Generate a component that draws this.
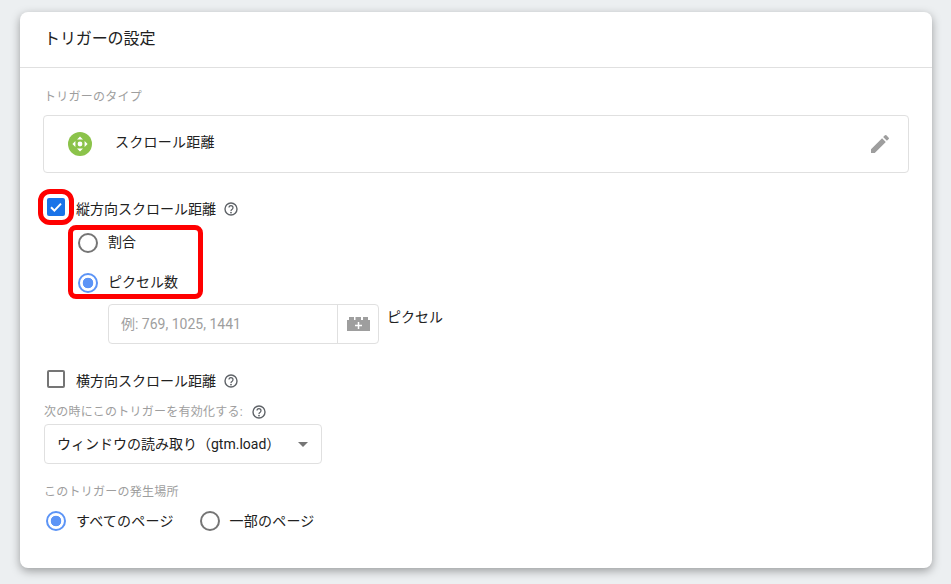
<div class="page">
  <section class="card">
    <header class="head">トリガーの設定</header>
    <div class="body">
      <div class="label type-label">トリガーのタイプ</div>
      <div class="type-box">
        <svg class="type-icon" viewBox="0 0 24 24" width="24" height="24">
          <circle cx="12" cy="12" r="12" fill="#8bc34a" />
          <circle cx="12" cy="12" r="2.4" fill="#fff" />
          <path d="M12 4.4l3 3h-6zM12 19.6l3-3H9zM4.4 12l3-3v6zM19.6 12l-3-3v6z" fill="#fff" />
        </svg>
        <span class="type-name">スクロール距離</span>
        <svg class="pencil" viewBox="0 0 24 24" width="24" height="24">
          <path d="M3 17.25V21h3.75L17.81 9.94l-3.75-3.75L3 17.25zM20.71 7.04a1 1 0 0 0 0-1.41l-2.34-2.34a1 1 0 0 0-1.41 0l-1.83 1.83 3.75 3.75 1.83-1.83z" fill="#9e9e9e" />
        </svg>
      </div>

      <div class="check-row first">
        <span class="check-mark">
          <span class="check on">
            <svg viewBox="0 0 18 18" width="18" height="18"><path d="M4 9.2l3.4 3.4L14 5.6" fill="none" stroke="#fff" stroke-width="2" /></svg>
          </span>
        </span>
        <span class="check-text">縦方向スクロール距離</span>
        <svg class="help" viewBox="0 0 16 16" width="16" height="16"><use href="#q" /></svg>
      </div>

      <div class="radio-group">
        <div class="radio-row"><span class="radio"></span><span class="raised">割合</span></div>
        <div class="radio-row second"><span class="radio on"></span><span class="raised">ピクセル数</span></div>
      </div>

      <div class="pixel-row">
        <div class="input">
          <span class="placeholder">例: 769, 1025, 1441</span>
          <span class="addon">
            <svg viewBox="0 0 23 14" width="23" height="14">
              <path d="M0 3h2V0h5v3h1.500V0h5.500v3H16V0h5v3h2v11H0z" fill="#9e9e9e" />
              <path d="M11.500 5v7M8 8.500h7" stroke="#fff" stroke-width="1.500" />
            </svg>
          </span>
        </div>
        <span class="unit">ピクセル</span>
      </div>

      <div class="check-row second-check">
        <span class="check"></span>
        <span class="check-text">横方向スクロール距離</span>
        <svg class="help" viewBox="0 0 16 16" width="16" height="16"><use href="#q" /></svg>
      </div>

      <div class="label fire-label">
        次の時にこのトリガーを有効化する:
        <svg class="help" viewBox="0 0 16 16" width="16" height="16"><use href="#q" /></svg>
      </div>
      <div class="select">
        <span>ウィンドウの読み取り（gtm.load）</span>
        <span class="caret"></span>
      </div>

      <div class="label where-label">このトリガーの発生場所</div>
      <div class="where">
        <div class="radio-row"><span class="radio on"></span><span class="wide">すべてのページ</span></div>
        <div class="radio-row"><span class="radio"></span><span class="wide">一部のページ</span></div>
      </div>
    </div>
  </section>

  <svg width="0" height="0" class="defs">
    <symbol id="q" viewBox="0 0 16 16">
      <circle cx="8" cy="8" r="6" fill="none" stroke="#5f6368" stroke-width="1.4" />
      <path d="M6 6.600a2 2 0 1 1 3.200 1.600c-.8.500-1.200.9-1.200 1.700" fill="none" stroke="#5f6368" stroke-width="1.300" />
      <circle cx="8" cy="11.600" r=".9" fill="#5f6368" />
    </symbol>
  </svg>
</div>

<style>
  :global(body) {
    margin: 0;
    background: #eceff1;
  }
  .page {
    width: 951px;
    height: 584px;
    padding: 12px 19px 0 20px;
    box-sizing: border-box;
    overflow: hidden;
    font-family: Roboto, "Noto Sans CJK JP", sans-serif;
    color: #212121;
    font-size: 14px;
    line-height: 20px;
  }
  .defs { position: absolute; }
  .card {
    height: 556px;
    background: #fff;
    border-radius: 8px;
    box-shadow: 0 3px 10px rgba(0, 0, 0, 0.35);
  }
  .head {
    height: 55px;
    border-bottom: 1px solid #e0e0e0;
    padding-left: 24px;
    font-size: 16px;
    letter-spacing: -0.1px;
    line-height: 53px;
  }
  .body { padding: 0 23px; }
  .label {
    font-size: 12px;
    line-height: 16px;
    color: #9e9e9e;
    padding-left: 1px;
    letter-spacing: 0.25px;
  }
  .type-label { padding-top: 21px; }
  .type-box {
    display: flex;
    align-items: center;
    height: 56px;
    margin-top: 10px;
    border: 1px solid #e0e0e0;
    border-radius: 4px;
    padding-left: 24px;
    padding-right: 16px;
  }
  .type-name { margin-left: 23px; margin-top: -4px; letter-spacing: 0.25px; }
  .pencil { margin-left: auto; }
  .type-icon { flex: none; }

  .check-row {
    display: flex;
    align-items: center;
    padding-left: 4px;
  }
  .first { margin-top: 25px; height: 18px; }
  .check {
    box-sizing: border-box;
    width: 18px;
    height: 18px;
    border: 2px solid #757575;
    border-radius: 2px;
    flex: none;
    display: block;
  }
  .check.on {
    background: #1a73e8;
    border: 0;
  }
  .check svg { display: block; }
  .check-mark {
    display: block;
    outline: 5px solid #f00;
    outline-offset: 4px;
    border-radius: 3px;
    width: 18px;
    height: 18px;
    flex: none;
  }
  .check-text { margin-left: 11px; margin-top: 4px; }
  .help { margin-left: 7px; flex: none; margin-top: 4px; }

  .radio-group {
    box-sizing: border-box;
    margin: 9px 0 0 25px;
    width: 135px;
    height: 74px;
    border: 5px solid #f00;
    border-radius: 8px;
    padding: 3px 5px;
  }
  .radio-row {
    display: flex;
    align-items: center;
    height: 20px;
    white-space: nowrap;
  }
  .second { margin-top: 20px; }
  .raised { margin-top: -2px; }
  .wide { letter-spacing: 0.2px; }
  .radio {
    box-sizing: border-box;
    width: 20px;
    height: 20px;
    border: 2px solid #757575;
    border-radius: 50%;
    margin-right: 10px;
    flex: none;
  }
  .radio.on {
    border-color: #5c94f6;
    background: radial-gradient(circle, #5c94f6 0 5px, #fff 5.6px);
  }

  .pixel-row {
    display: flex;
    margin: 5px 0 0 65px;
  }
  .input {
    box-sizing: border-box;
    display: flex;
    width: 271px;
    height: 40px;
    border: 1px solid #e0e0e0;
    border-radius: 4px;
  }
  .placeholder {
    flex: 1;
    padding-left: 12px;
    line-height: 39px;
    color: #9e9e9e;
  }
  .addon {
    width: 40px;
    border-left: 1px solid #e0e0e0;
    display: flex;
    align-items: center;
    justify-content: center;
  }
  .unit { margin-left: 8px; margin-top: 3px; }

  .second-check { margin-top: 26px; height: 18px; }
  .fire-label {
    display: flex;
    align-items: center;
    margin-top: 16px;
  }
  .fire-label .help { margin-top: 0; margin-left: 8px; }
  .select {
    box-sizing: border-box;
    display: flex;
    align-items: center;
    width: 278px;
    height: 40px;
    margin: 4px 0 0 1px;
    border: 1px solid #e0e0e0;
    border-radius: 4px;
    padding: 0 13px 0 12px;
    white-space: nowrap;
  }
  .caret {
    margin-left: auto;
    border-left: 5px solid transparent;
    border-right: 5px solid transparent;
    border-top: 5px solid #757575;
  }
  .where-label { margin-top: 20px; }
  .where {
    display: flex;
    gap: 26px;
    margin-top: 11px;
    padding-left: 3px;
  }
</style>
